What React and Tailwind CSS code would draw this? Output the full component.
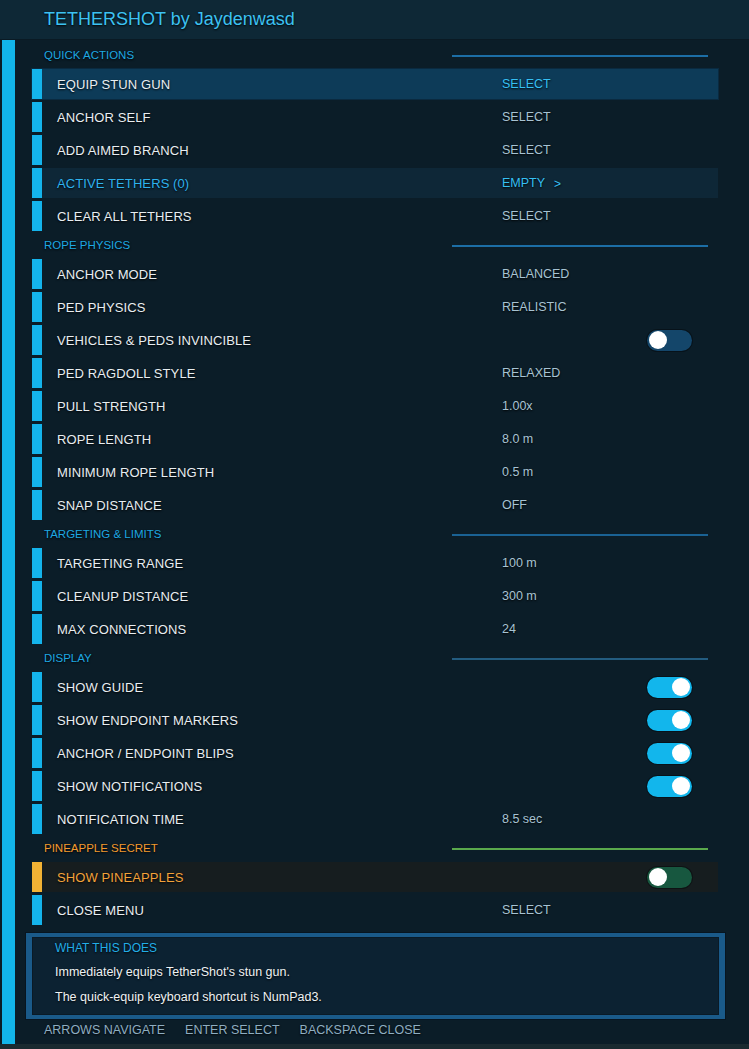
import React from "react";

const sections = [
  {
    title: "QUICK ACTIONS",
    line: "bg-[#1c6ea6]",
    rows: [
      { label: "EQUIP STUN GUN", value: "SELECT", selected: true },
      { label: "ANCHOR SELF", value: "SELECT" },
      { label: "ADD AIMED BRANCH", value: "SELECT" },
      { label: "ACTIVE TETHERS (0)", value: "EMPTY", arrow: true, accent: true },
      { label: "CLEAR ALL TETHERS", value: "SELECT" },
    ],
  },
  {
    title: "ROPE PHYSICS",
    line: "bg-[#1c6ea6]",
    rows: [
      { label: "ANCHOR MODE", value: "BALANCED" },
      { label: "PED PHYSICS", value: "REALISTIC" },
      { label: "VEHICLES & PEDS INVINCIBLE", toggle: "off" },
      { label: "PED RAGDOLL STYLE", value: "RELAXED" },
      { label: "PULL STRENGTH", value: "1.00x" },
      { label: "ROPE LENGTH", value: "8.0 m" },
      { label: "MINIMUM ROPE LENGTH", value: "0.5 m" },
      { label: "SNAP DISTANCE", value: "OFF" },
    ],
  },
  {
    title: "TARGETING & LIMITS",
    line: "bg-[#1a6294]",
    rows: [
      { label: "TARGETING RANGE", value: "100 m" },
      { label: "CLEANUP DISTANCE", value: "300 m" },
      { label: "MAX CONNECTIONS", value: "24" },
    ],
  },
  {
    title: "DISPLAY",
    line: "bg-[#235c80]",
    rows: [
      { label: "SHOW GUIDE", toggle: "on" },
      { label: "SHOW ENDPOINT MARKERS", toggle: "on" },
      { label: "ANCHOR / ENDPOINT BLIPS", toggle: "on" },
      { label: "SHOW NOTIFICATIONS", toggle: "on" },
      { label: "NOTIFICATION TIME", value: "8.5 sec" },
    ],
  },
  {
    title: "PINEAPPLE SECRET",
    orange: true,
    line: "bg-[#5aa94c]",
    rows: [
      { label: "SHOW PINEAPPLES", toggle: "green", pineapple: true },
      { label: "CLOSE MENU", value: "SELECT" },
    ],
  },
];

const shadow = "[text-shadow:0_1px_2px_rgba(0,0,0,0.95)]";

function Toggle({ state }) {
  const on = state === "on";
  const track =
    state === "on" ? "bg-[#12b6ec]" : state === "green" ? "bg-[#17573f]" : "bg-[#14466a]";
  return (
    <div
      className={`ml-auto mr-[26px] flex h-[21px] w-[45px] items-center rounded-full px-[2px] ${track} ${
        on ? "justify-end" : "justify-start"
      } shadow-[0_0_0_1px_rgba(0,0,0,0.35)]`}
    >
      <div className="h-[18px] w-[18px] rounded-full bg-white" />
    </div>
  );
}

function Row({ row }) {
  let bg = "";
  if (row.selected) bg = "bg-[#0d3b58] shadow-[0_0_0_1px_#0a2a40]";
  else if (row.accent) bg = "bg-[#0e2737]";
  else if (row.pineapple) bg = "bg-[#161d1f]";

  const labelColor = row.accent
    ? "text-[#2eb2ee]"
    : row.pineapple
    ? "text-[#f2a23a]"
    : "text-[#e8eef2]";
  const valueColor = row.selected || row.accent ? "text-[#36c0f4]" : "text-[#a7c3d3]";
  const bar = row.pineapple ? "bg-[#f2b234]" : "bg-[#14b4ec]";

  return (
    <div className={`mb-[3px] flex h-[30px] w-[686px] items-center ${bg}`}>
      <div className={`h-full w-[10px] shrink-0 ${bar}`} />
      <div
        className={`w-[460px] shrink-0 pl-[15px] pt-[1px] text-[13px] tracking-[0.1px] ${labelColor} ${shadow}`}
      >
        {row.label}
      </div>
      {row.toggle ? (
        <Toggle state={row.toggle} />
      ) : (
        <div className={`flex items-center pt-[1px] text-[12.5px] ${valueColor} ${shadow}`}>
          {row.value}
          {row.arrow && <span className="ml-[9px] text-[12px]">&gt;</span>}
        </div>
      )}
    </div>
  );
}

function Section({ s }) {
  return (
    <div>
      <div className="flex h-[25px] w-[686px] items-center pb-[2px]">
        <div
          className={`w-[420px] shrink-0 pl-[12px] text-[11.5px] ${
            s.orange ? "text-[#f29a2e]" : "text-[#1ea8e2]"
          } ${shadow}`}
        >
          {s.title}
        </div>
        <div className={`h-[2px] w-[256px] ${s.line}`} />
      </div>
      {s.rows.map((r) => (
        <Row key={r.label} row={r} />
      ))}
    </div>
  );
}

export default function App() {
  return (
    <div
      className="flex h-[1049px] w-[749px] flex-col overflow-hidden bg-[#0a1c26]"
      style={{ fontFamily: '"Liberation Sans", Arial, sans-serif' }}
    >
      <header className="flex h-[40px] shrink-0 items-center border-b border-[#0a1a24] bg-[#0e2836] pl-[44px]">
        <h1 className={`text-[18px] text-[#3cc2f2] ${shadow}`}>TETHERSHOT by Jaydenwasd</h1>
      </header>

      <div className="flex flex-1">
        <div className="ml-[2px] w-[13px] shrink-0 bg-[#12b5ea]" />

        <div className="flex flex-1 flex-col bg-[#0b1d28] pt-[4px]">
          <div className="pl-[17px]">
            {sections.map((s) => (
              <Section key={s.title} s={s} />
            ))}
          </div>

          <div className="ml-[10px] mt-[4px] w-[701px] border border-[#071520] bg-[#1a5a89] px-[6px] py-[4px]">
            <div className="flex h-[78px] flex-col border border-[#0a1a26] bg-[#0c2232] pl-[22px] pt-[2px] leading-[16px]">
              <div className={`text-[12px] text-[#22aee8] ${shadow}`}>WHAT THIS DOES</div>
              <div className={`mt-[8px] text-[12.5px] text-[#eef2f4] ${shadow}`}>
                Immediately equips TetherShot's stun gun.
              </div>
              <div className={`mt-[9px] text-[12.5px] text-[#eef2f4] ${shadow}`}>
                The quick-equip keyboard shortcut is NumPad3.
              </div>
            </div>
          </div>

          <div
            className={`flex gap-[20px] pl-[29px] pt-[1px] text-[12.5px] leading-[18px] text-[#8eaec2] ${shadow}`}
          >
            <span>ARROWS NAVIGATE</span>
            <span>ENTER SELECT</span>
            <span>BACKSPACE CLOSE</span>
          </div>
        </div>
      </div>
      <div className="h-[5px] shrink-0 bg-[#1a2a30]" />
    </div>
  );
}
